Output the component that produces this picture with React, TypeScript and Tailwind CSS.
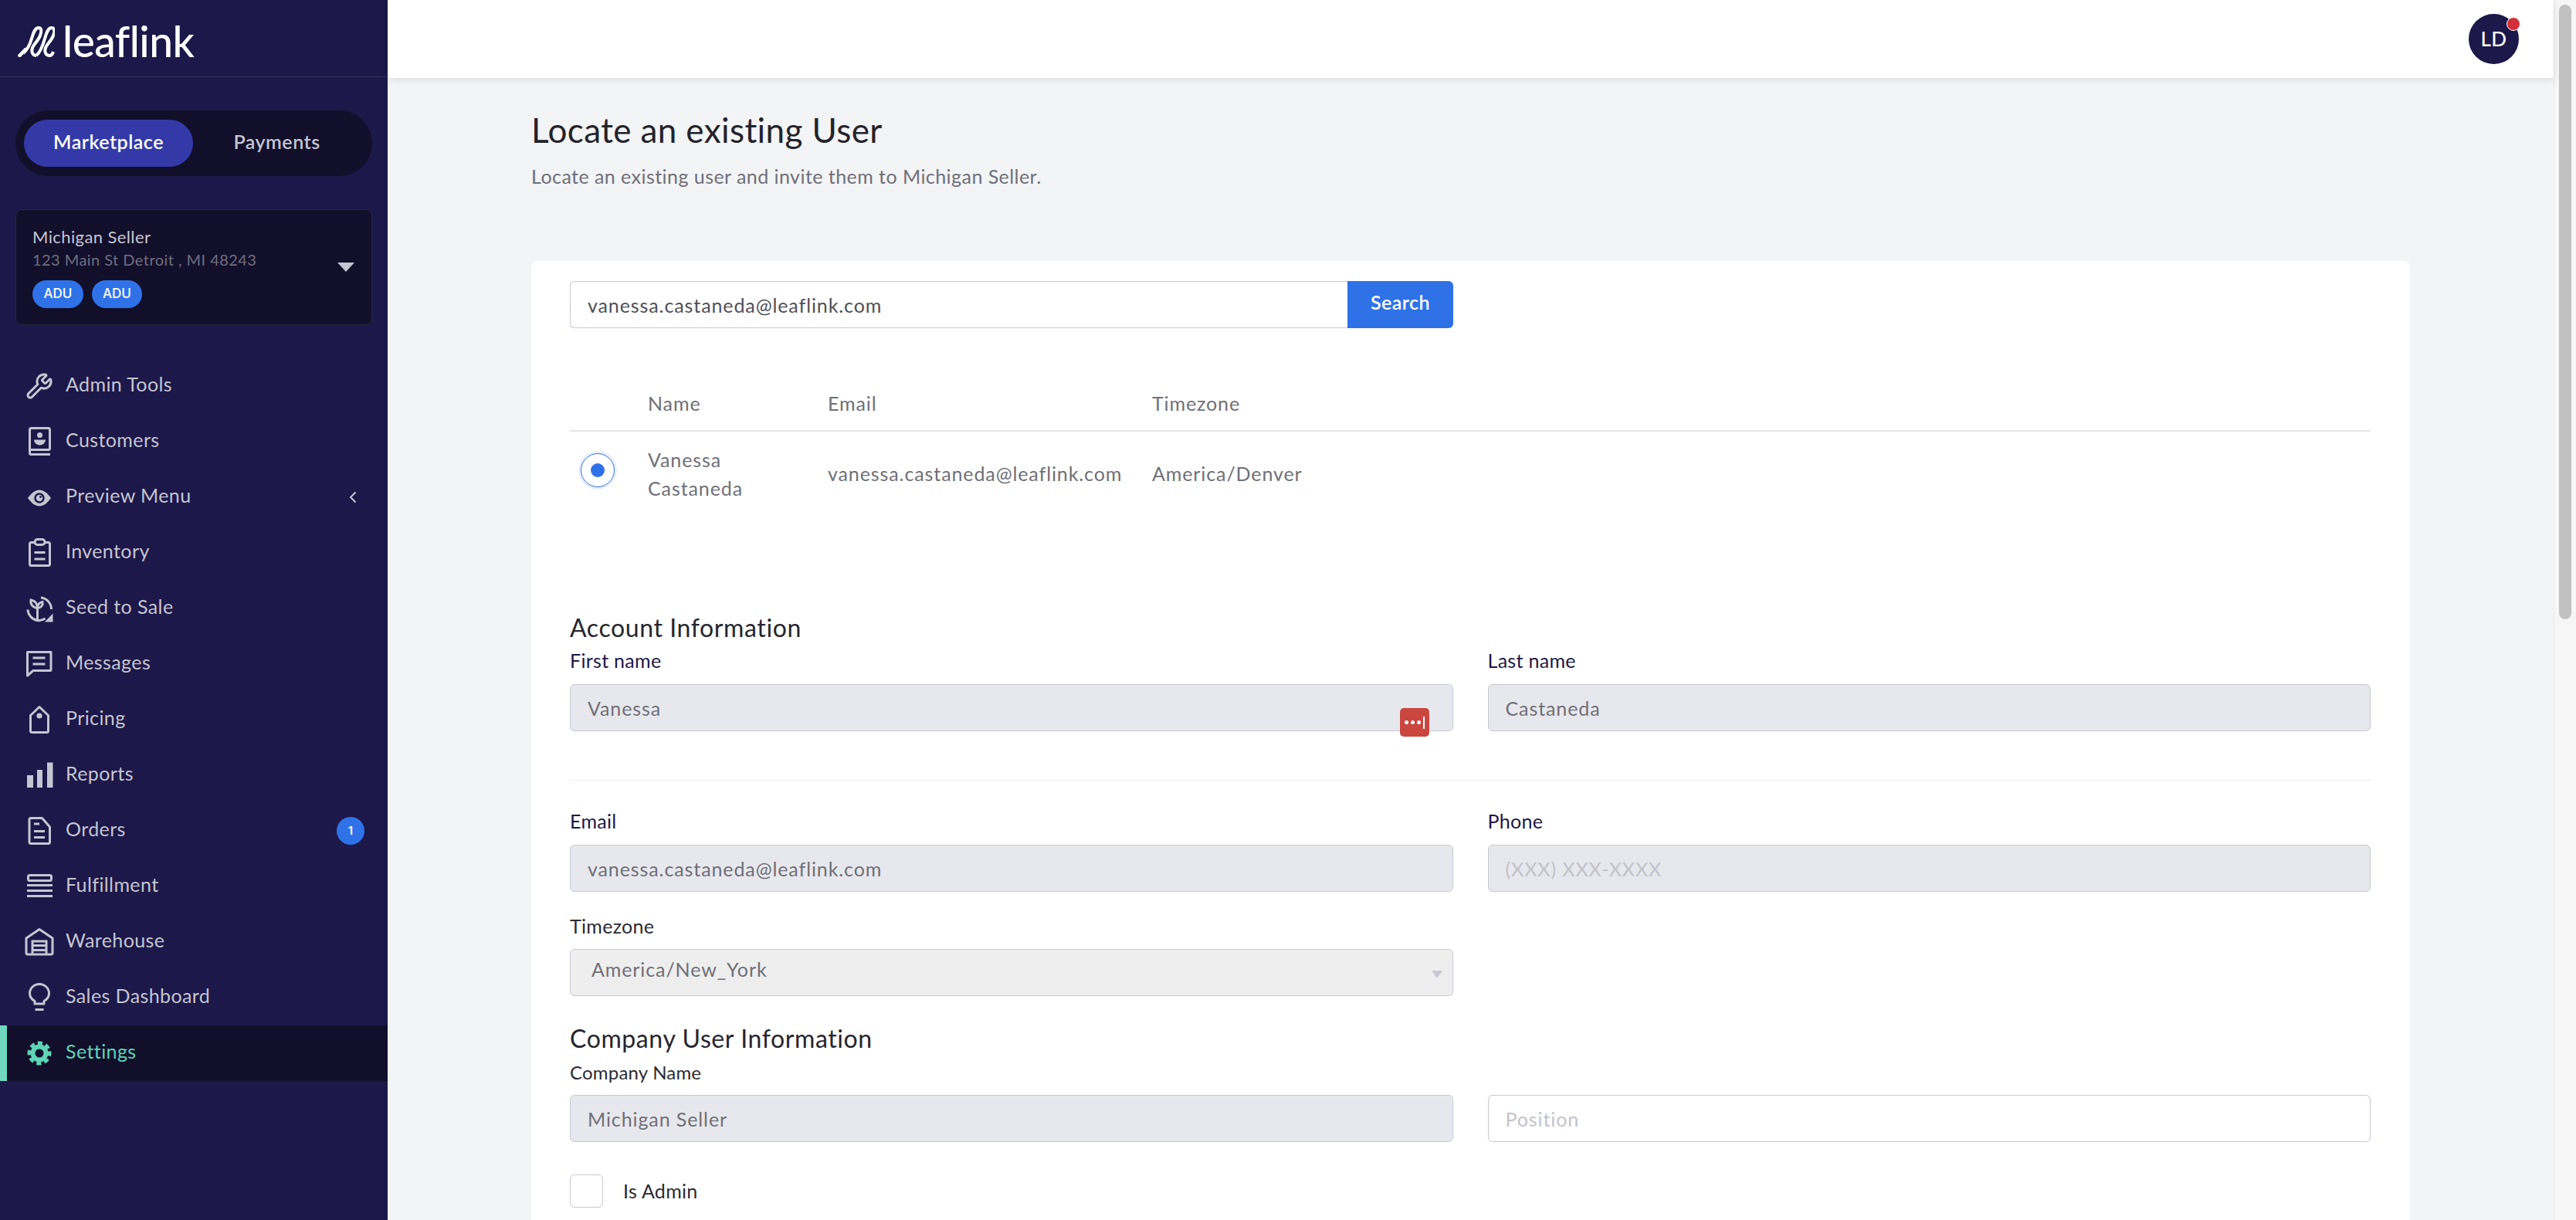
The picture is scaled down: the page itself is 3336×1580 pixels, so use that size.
import { Wrench } from "lucide-react";
import type { ReactNode } from "react";

// sidebar icons are drawn on a 36 box so every row lines up on the same centre
function Ico({ children }: { children: ReactNode }) {
  return (
    <svg viewBox="0 0 36 36" fill="none" stroke="currentColor" strokeWidth={3} className="h-9 w-9 shrink-0 overflow-visible">
      {children}
    </svg>
  );
}

const icons: Record<string, ReactNode> = {
  customers: (
    <Ico>
      <rect x="5.5" y="0.5" width="26" height="28" rx="2" />
      <path d="M7 34.5h25" />
      <path d="M5.5 26v6.5a2 2 0 0 0 2 2" />
      <circle cx="18.5" cy="9.5" r="3.5" fill="currentColor" stroke="none" />
      <path d="M11 15.5h15a7.5 7 0 0 1-15 0z" fill="currentColor" stroke="none" />
    </Ico>
  ),
  preview: (
    <Ico>
      <path d="M3 19C8 12 13 8.5 18 8.5S28 12 33 19c-5 7-10 10.5-15 10.5S8 26 3 19z" fill="currentColor" stroke="none" />
      <circle cx="18" cy="19" r="5.5" stroke="#1c1849" strokeWidth={2.5} />
      <circle cx="19.5" cy="17.5" r="1.4" fill="#1c1849" stroke="none" />
    </Ico>
  ),
  inventory: (
    <Ico>
      <rect x="5.5" y="4.5" width="26" height="30" rx="2" />
      <rect x="12" y="0.5" width="13" height="7" rx="3.5" fill="#1c1849" />
      <path d="M11.5 17.5h14M11.5 26h14" />
    </Ico>
  ),
  seed: (
    <Ico>
      <path d="M20 4a15 15 0 0 1 13.5 15" />
      <path d="M3 19.5A15 15 0 0 0 15 33.5c4 .5 7.5-.5 10.500-2.500" />
      <path d="M35.5 24.5V35.5H25z" fill="currentColor" stroke="none" />
      <path d="M15.500 17V34" />
      <path d="M15.500 17.500c0-5.500-3-9.500-8.500-10.500-1 5.500 2.500 10 8.500 10.500z" />
      <path d="M15.500 17.500c0-4 2-7 6.500-8 1 4-1.500 7.500-6.500 8z" />
    </Ico>
  ),
  messages: (
    <Ico>
      <path d="M2.5 2.5h30.500v23a1 1 0 0 1-1 1H10L2.5 33z" strokeLinejoin="round" />
      <path d="M9.5 10h16M9.5 18h16" />
    </Ico>
  ),
  pricing: (
    <Ico>
      <path d="M6.5 12.5 18 1.5l11.5 11v20a2 2 0 0 1-2 2h-19a2 2 0 0 1-2-2z" strokeLinejoin="round" />
      <circle cx="18" cy="13" r="3.6" fill="currentColor" stroke="none" />
    </Ico>
  ),
  reports: (
    <Ico>
      <g fill="currentColor" stroke="none">
        <rect x="2" y="18" width="8" height="16" />
        <rect x="15" y="11" width="7" height="23" />
        <rect x="28" y="1.5" width="7.5" height="32.5" />
      </g>
    </Ico>
  ),
  orders: (
    <Ico>
      <path d="M7 1.5h14.5l10 11.5v19.5a2 2 0 0 1-2 2H7a2 2 0 0 1-2-2v-29a2 2 0 0 1 2-2z" strokeLinejoin="round" />
      <path d="M11 9h7M11 18.5h14M11 26.5h14" />
    </Ico>
  ),
  fulfillment: (
    <Ico>
      <rect x="3.5" y="3.5" width="30" height="7" rx="2" />
      <path d="M2 16.5h33M2 23.5h33M2 30.5h33" />
    </Ico>
  ),
  warehouse: (
    <Ico>
      <path d="M1 13 18 1.5 35 13v19a2 2 0 0 1-2 2H3a2 2 0 0 1-2-2z" strokeLinejoin="round" />
      <path d="M9 34V17h18v17M10 22.5h16M10 28.5h16" />
    </Ico>
  ),
  bulb: (
    <Ico>
      <path d="M12 26v-3.5c-3.5-2-6.5-5.500-6.500-10a12.500 12 0 0 1 25 0c0 4.500-3 8-6.500 10V26z" strokeLinejoin="round" />
      <path d="M12.5 33.5h11" />
    </Ico>
  ),
  settings: (
    <Ico>
      <circle cx="18" cy="18" r="13" strokeWidth={5} strokeDasharray="6 4.21" transform="rotate(-11 18 18)" />
      <circle cx="18" cy="18" r="8.5" strokeWidth={6} />
    </Ico>
  ),
};

const navItems = [
  { label: "Admin Tools", icon: <Wrench size={36} strokeWidth={2} className="shrink-0" /> },
  { label: "Customers", icon: icons.customers },
  { label: "Preview Menu", icon: icons.preview, chevron: true },
  { label: "Inventory", icon: icons.inventory },
  { label: "Seed to Sale", icon: icons.seed },
  { label: "Messages", icon: icons.messages },
  { label: "Pricing", icon: icons.pricing },
  { label: "Reports", icon: icons.reports },
  { label: "Orders", icon: icons.orders, badge: "1" },
  { label: "Fulfillment", icon: icons.fulfillment },
  { label: "Warehouse", icon: icons.warehouse },
  { label: "Sales Dashboard", icon: icons.bulb },
  { label: "Settings", icon: icons.settings, active: true },
];

function LeafMark() {
  return (
    <svg viewBox="0 0 48 40" fill="none" stroke="#ffffff" strokeWidth={4} className="h-10 w-12 shrink-0">
      <path d="M1 39.5 11 29" strokeWidth={4.5} />
      <path d="M7 35c6-5 9-12 11-19 2-7 4-14 9-14 4 0 4 5 2 10-2 6-8 11-10 16-2 6 1 10 5 10" />
      <path d="M24 38c6-5 9-15 11-22 2-7 4-14 9-14 4 0 4 5 2 10-2 6-8 11-10 16-2 6 1 10 5 10 3 0 4-2 5-5" />
    </svg>
  );
}

function Sidebar() {
  return (
    <aside className="flex h-full w-[502px] shrink-0 flex-col bg-[#1c1849]">
      <div className="flex h-[100px] items-start gap-[10px] border-b border-[#37335f] pl-[23px] pt-[34px]">
        <LeafMark />
        <span className="-mt-[13px] text-[55px] font-medium leading-[64px] tracking-[-0.5px] text-white">leaflink</span>
      </div>

      <div className="mx-5 mt-[43px] flex h-[85px] items-center rounded-full bg-[#120f2b] px-[11px]">
        <div className="flex h-[61px] w-[219px] items-center justify-center rounded-full bg-[#333aa8] pb-[3px] text-[25px] font-semibold tracking-[0.5px] text-white">
          Marketplace
        </div>
        <div className="flex-1 pb-[3px] pr-[4px] text-center text-[25px] font-semibold tracking-[0.5px] text-[#c5c5d2]">Payments</div>
      </div>

      <div className="relative mx-5 mt-[43px] h-[150px] rounded-lg border border-[#2a2740] bg-[#120f2b] pl-[21px] pt-[20px]">
        <div className="text-[22px] leading-[30px] tracking-[0.4px] text-[#c5c5d2]">Michigan Seller</div>
        <div className="text-[20px] leading-[28px] tracking-[0.45px] text-[#6f6d80]">123 Main St Detroit , MI 48243</div>
        <div className="mt-[13px] flex gap-[11px]">
          <span className="flex h-9 w-[66px] items-center justify-center rounded-full bg-[#2f72e8] font-['Inter',sans-serif] text-[17px] font-medium text-white">ADU</span>
          <span className="flex h-9 w-[65px] items-center justify-center rounded-full bg-[#2f72e8] font-['Inter',sans-serif] text-[17px] font-medium text-white">ADU</span>
        </div>
        <svg viewBox="0 0 22 12" className="absolute left-[416px] top-[68px] h-3 w-[22px]">
          <path d="M0 0h22L11 12z" fill="#c5c5d2" />
        </svg>
      </div>

      <nav className="mt-[43px] flex flex-col">
        {navItems.map((item) => (
          <div
            key={item.label}
            className={`flex h-[72px] items-center pr-[32px] ${
              item.active ? "border-l-[9px] border-[#70d8bf] bg-[#120f2b] pl-[24px] text-[#5fd4b6]" : "pl-[33px] text-[#c5c5d2]"
            }`}
          >
            {item.icon}
            <span className="-mt-[4px] ml-4 text-[25px] tracking-[0.4px]">{item.label}</span>
            {item.chevron && (
              <svg viewBox="0 0 10 16" fill="none" stroke="#c5c5d2" strokeWidth={2} className="ml-auto mr-[8px] h-4 w-[10px]">
                <path d="M8.5 1.5 2 8l6.5 6.5" />
              </svg>
            )}
            {item.badge && (
              <span className="-mr-[2px] ml-auto flex h-9 w-9 items-center justify-center rounded-full bg-[#2f72e8] font-['Inter',sans-serif] text-[15px] font-semibold text-white">
                {item.badge}
              </span>
            )}
          </div>
        ))}
      </nav>
    </aside>
  );
}

function TextBox({ value, placeholder, disabled = true }: { value?: string; placeholder?: string; disabled?: boolean }) {
  return (
    <input
      readOnly
      value={value ?? ""}
      placeholder={placeholder}
      className={`h-[61px] w-full rounded-md border border-[#c8c8d4] px-[22px] text-[25px] tracking-[0.9px] text-[#6f6f78] outline-none placeholder:text-[#c2c2cc] ${
        disabled ? "bg-[#e7e8ed]" : "bg-white"
      }`}
    />
  );
}

function Field({ label, children }: { label: string; children: ReactNode }) {
  return (
    <div>
      <div className="mb-[14px] h-[34px] text-[25px] leading-[34px] tracking-[0.3px] text-[#1c1849]">{label}</div>
      {children}
    </div>
  );
}

function Heading({ children }: { children: ReactNode }) {
  return <h2 className="h-10 text-[32px] leading-10 tracking-[0.6px] text-[#26262e]">{children}</h2>;
}

function PasswordBadge() {
  return (
    <div className="absolute bottom-[-7px] right-[31px] flex h-[37px] w-[38px] items-center justify-center gap-[3px] rounded-[5px] bg-[#c9473f]">
      <span className="h-[5px] w-[5px] rounded-full bg-white" />
      <span className="h-[5px] w-[5px] rounded-full bg-white" />
      <span className="h-[5px] w-[5px] rounded-full bg-white" />
      <span className="h-[16px] w-[2px] bg-white" />
    </div>
  );
}

function UserForm() {
  return (
    <div className="min-h-[1300px] rounded-t-lg bg-white pl-[50px] pr-[51px] pt-[26px]">
      <div className="flex h-[61px] w-[1144px]">
        <input
          readOnly
          value="vanessa.castaneda@leaflink.com"
          className="h-full flex-1 rounded-l-md border border-r-0 border-[#c8c8d4] px-[22px] text-[25px] tracking-[0.9px] text-[#4f4f58] outline-none"
        />
        <button className="h-full w-[137px] rounded-r-md bg-[#2f72e8] pb-[6px] text-[25px] font-semibold tracking-[0.5px] text-white">Search</button>
      </div>

      <div className="mt-[64px] grid h-[70px] grid-cols-[101px_233px_420px_1fr] items-center border-b-2 border-[#e3e4e8] text-[25px] tracking-[0.9px] text-[#6f6f78]">
        <span />
        <span>Name</span>
        <span>Email</span>
        <span>Timezone</span>
      </div>
      <div className="grid h-[110px] grid-cols-[101px_233px_420px_1fr] items-center text-[25px] tracking-[0.9px] text-[#6f6f78]">
        <div className="mb-[10px] ml-[14px] flex h-11 w-11 items-center justify-center rounded-full border-[1.5px] border-[#2f72e8] shadow-[0_0_0_3px_#e8eefb]">
          <div className="h-[18px] w-[18px] rounded-full bg-[#2f72e8]" />
        </div>
        <div className="leading-[37px]">
          Vanessa
          <br />
          Castaneda
        </div>
        <div>vanessa.castaneda@leaflink.com</div>
        <div>America/Denver</div>
      </div>

      <div className="mt-[124px]">
        <Heading>Account Information</Heading>
      </div>
      <div className="mt-[5px] grid grid-cols-2 gap-x-[45px]">
        <Field label="First name">
          <div className="relative">
            <TextBox value="Vanessa" />
            <PasswordBadge />
          </div>
        </Field>
        <Field label="Last name">
          <TextBox value="Castaneda" />
        </Field>
      </div>

      <div className="mt-[63px] border-t border-[#eeeef1]" />

      <div className="mt-[35px] grid grid-cols-2 gap-x-[45px]">
        <Field label="Email">
          <TextBox value="vanessa.castaneda@leaflink.com" />
        </Field>
        <Field label="Phone">
          <TextBox placeholder="(XXX) XXX-XXXX" />
        </Field>
      </div>

      <div className="mt-[27px] grid grid-cols-2 gap-x-[45px]">
        <div>
          <div className="mb-[13px] h-[34px] text-[25px] leading-[34px] tracking-[0.3px] text-[#2b2b33]">Timezone</div>
          <div className="relative flex h-[61px] items-center rounded-md border border-[#c8c8d4] bg-[#eeeeee] pb-2 pl-[27px] text-[25px] tracking-[0.9px] text-[#6f6f78]">
            America/New_York
            <svg viewBox="0 0 14 10" className="absolute right-[13px] top-[27px] h-[10px] w-[14px]">
              <path d="M0 0h14L7 10z" fill="#c8c8d4" />
            </svg>
          </div>
        </div>
      </div>

      <div className="mt-[35px]">
        <Heading>Company User Information</Heading>
      </div>
      <div className="mt-[7px] grid grid-cols-2 items-end gap-x-[45px]">
        <div>
          <div className="mb-[12px] h-[34px] text-[24px] leading-[34px] tracking-[0.2px] text-[#2b2b33]">Company Name</div>
          <TextBox value="Michigan Seller" />
        </div>
        <TextBox placeholder="Position" disabled={false} />
      </div>

      <label className="mt-[42px] flex items-center gap-[26px] text-[25px] tracking-[0.3px] text-[#2b2b33]">
        <span className="h-[43px] w-[43px] rounded-md border border-[#c8c8d4] bg-white" />
        Is Admin
      </label>
    </div>
  );
}

export default function App() {
  return (
    <div className="flex h-[1580px] w-full overflow-hidden bg-[#f3f4f6] font-['Lato','Noto_Sans',sans-serif]">
      <Sidebar />
      <main className="flex h-full min-w-0 flex-1 flex-col">
        <header className="relative z-10 flex h-[101px] shrink-0 items-center justify-end bg-white pr-[45px] shadow-[0_2px_10px_rgba(0,0,0,0.1)]">
          <div className="relative flex h-[65px] w-[65px] items-center justify-center rounded-full bg-[#1c1849] text-[26px] font-medium tracking-[0.5px] text-white">
            LD
            <span className="absolute right-[-2px] top-[4px] h-[18px] w-[18px] rounded-full border border-white bg-[#d22f38]" />
          </div>
        </header>
        <div className="px-[186px] pt-[42px]">
          <h1 className="h-[50px] text-[44px] leading-[50px] tracking-[0.4px] text-[#23232b]">Locate an existing User</h1>
          <p className="mt-[18px] text-[25px] leading-[34px] tracking-[0.45px] text-[#6f6f78]">Locate an existing user and invite them to Michigan Seller.</p>
          <div className="mt-[93px]">
            <UserForm />
          </div>
        </div>
      </main>
      <div className="flex h-full w-[29px] shrink-0 justify-center border-l border-[#e8e8e8] bg-[#f6f6f6] pt-[6px]">
        <div className="h-[796px] w-4 rounded-full bg-[#c1c1c1]" />
      </div>
    </div>
  );
}
